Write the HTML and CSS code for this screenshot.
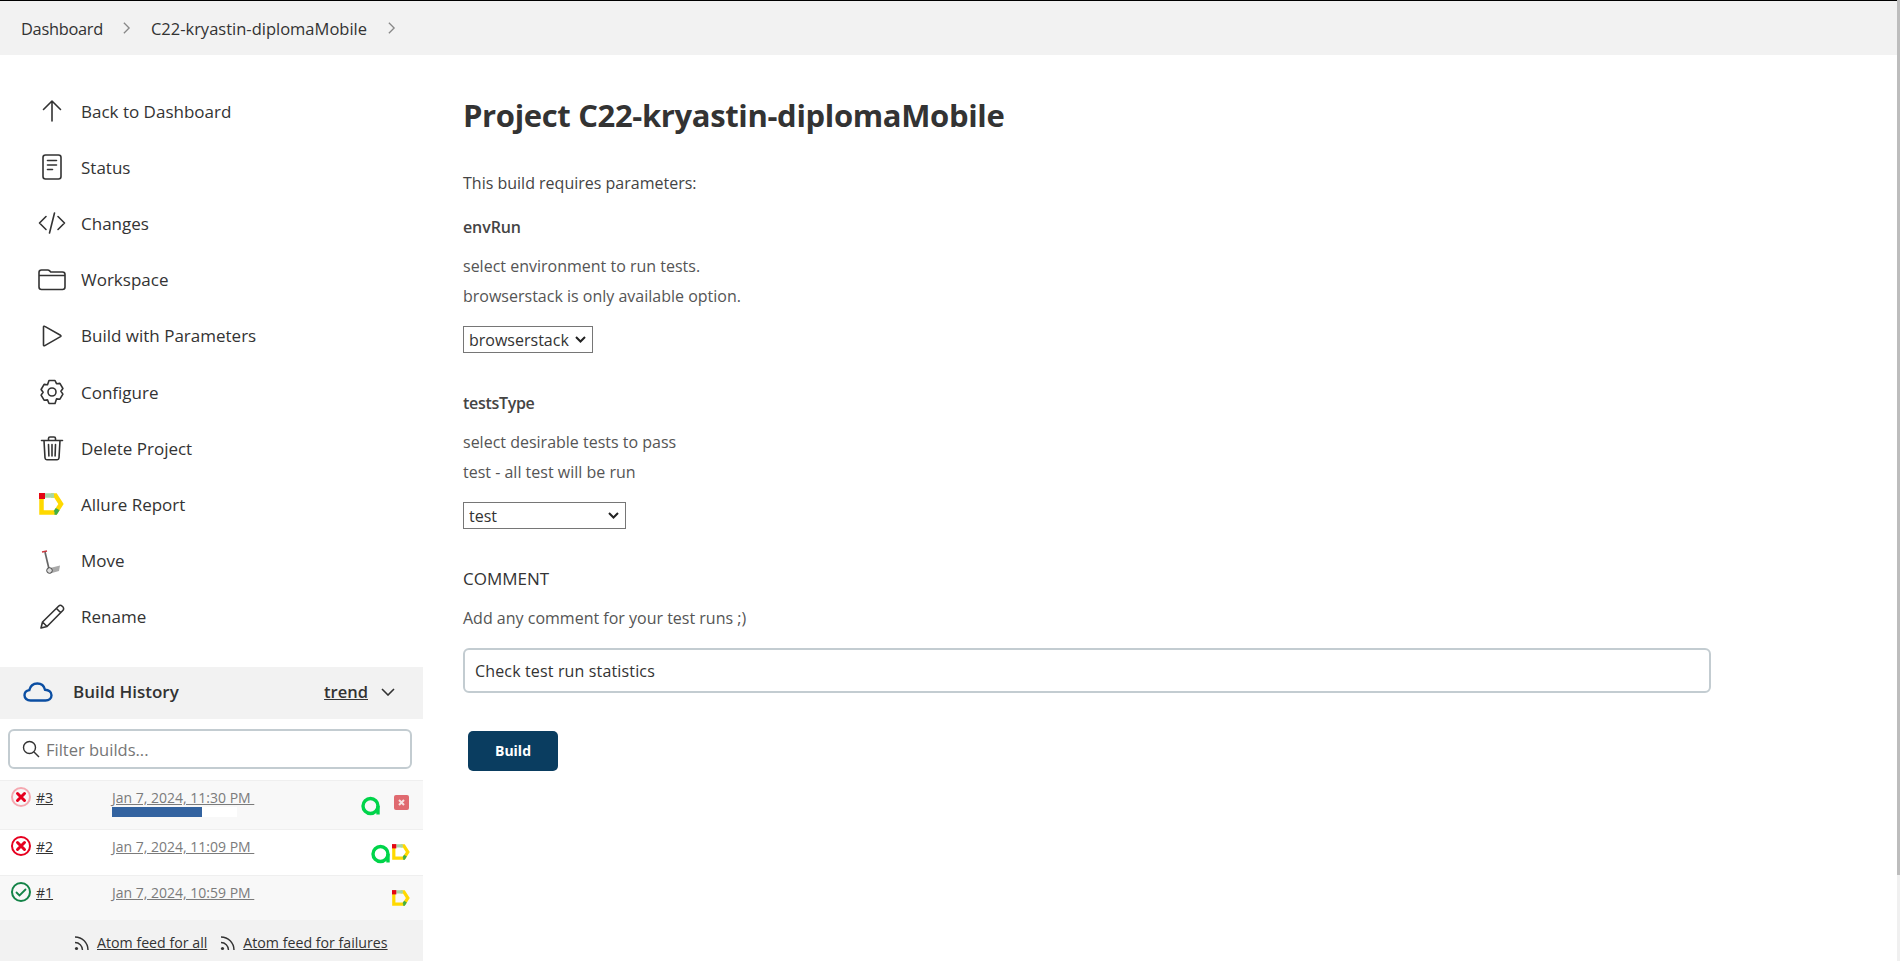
FILE: index.html
```html
<!DOCTYPE html>
<html lang="en">
<head>
    <meta charset="UTF-8">
    <title>C22-kryastin-diplomaMobile [Jenkins]</title>
    <link rel="stylesheet" href="styles.css">
</head>
<body>

<div id="page">
    <div id="breadcrumbBar">
        <a class="crumb firstCrumb">Dashboard</a>
        <svg class="crumbArrow" viewBox="0 0 10 16"><path d="M2 2l6 6-6 6"/></svg>
        <a class="crumb projectCrumb">C22-kryastin-diplomaMobile</a>
        <svg class="crumbArrow lastArrow" viewBox="0 0 10 16"><path d="M2 2l6 6-6 6"/></svg>
    </div>

    <div id="content">
        <div id="sidebar">
            <div id="tasks">
                <div class="task">
                    <svg class="icon" viewBox="0 0 28 28"><path d="M14 24V4M5.500 12.500L14 4l8.500 8.500"/></svg>
                    <span>Back to Dashboard</span>
                </div>
                <div class="task">
                    <svg class="icon" viewBox="0 0 28 28"><rect x="5" y="2" width="18" height="24" rx="2.500"/><path d="M9.500 7.500h9M9.500 12h9M9.500 16.500h5"/></svg>
                    <span>Status</span>
                </div>
                <div class="task">
                    <svg class="icon" viewBox="0 0 28 28"><path d="M8 7.500L1.500 14 8 20.500M20 7.500l6.500 6.500-6.500 6.500M16.500 4l-5 20"/></svg>
                    <span>Changes</span>
                </div>
                <div class="task">
                    <svg class="icon" viewBox="0 0 28 28"><path d="M1 9V6.500C1 5.100 2 4 3.500 4h6.200c.8 0 1.400.3 2 .9l1 1.100H24.500C26 6 27 7.100 27 8.500V21c0 1.600-1 2.500-2.500 2.500h-21C2 23.500 1 22.600 1 21V9zM1 9.500h26"/></svg>
                    <span>Workspace</span>
                </div>
                <div class="task">
                    <svg class="icon" viewBox="0 0 28 28"><path d="M5.500 5v18c0 .8.700 1 1.300.6L22.500 14.600c.6-.4.600-.9 0-1.300L6.800 4.400C6.200 4 5.500 4.200 5.500 5z"/></svg>
                    <span>Build with Parameters</span>
                </div>
                <div class="task">
                    <svg class="icon" viewBox="0 0 28 28"><path d="M11 2.500h6l1.500 3.200 3.400-.3 3 5.100-2 2.800 2 2.800-3 5.100-3.400-.3L17 25.500h-6l-1.500-3.600-3.400.3-3-5.100 2-2.800-2-2.800 3-5.100 3.400.3z"/><circle cx="14" cy="14" r="4"/></svg>
                    <span>Configure</span>
                </div>
                <div class="task">
                    <svg class="icon" viewBox="0 0 28 28"><path d="M3.500 6.500h21M10.500 6.500V4.500c0-1 .7-1.500 1.500-1.500h4c.9 0 1.500.5 1.500 1.500v2M6 6.500l1 17.500c.1 1 .8 1.700 1.800 1.700h10.400c1 0 1.700-.7 1.800-1.700L22 6.500M10.500 10.500l.4 11.500M14 10.500V22M17.500 10.500L17.100 22"/></svg>
                    <span>Delete Project</span>
                </div>
                <div class="task">
                    <svg class="allure" viewBox="0 0 25 22">
                        <path class="alY" d="M2.500 2.500V19.500H16.500L22 11 16.500 2.500H12"/>
                        <path class="alG" d="M6 2.500h9"/>
                        <path class="alR" d="M0 0h6v6H0z"/>
                        <path class="alD" d="M15.500 19.500h1l2.200-3.400"/>
                    </svg>
                    <span>Allure Report</span>
                </div>
                <div class="task">
                    <svg class="moveIcon" viewBox="0 0 28 28">
                        <path class="movePlate" d="M12 21l10-2.500-1 5.500-9 2.500z"/>
                        <path class="movePole" d="M7 5l4 17"/>
                        <path class="moveGrip" d="M4 5l5-1"/>
                        <circle class="moveWheel" cx="11.500" cy="23.500" r="2.800"/>
                    </svg>
                    <span>Move</span>
                </div>
                <div class="task">
                    <svg class="icon" viewBox="0 0 28 28"><path d="M3 25l1.500-6L20.500 3.200c1.100-1.100 2.600-1.100 3.700 0l.6.600c1.100 1.100 1.100 2.600 0 3.700L9 23.500zM4.500 19L9 23.500M18.500 5.500l4 4"/></svg>
                    <span>Rename</span>
                </div>
            </div>

            <div id="historyHeader">
                <svg class="cloud" viewBox="0 0 30 20"><path d="M7.500 18.500C4 18.500 1.500 16.300 1.500 13.300c0-2.800 2-4.800 4.800-5.200C7.300 4 10.300 1.500 14.300 1.500c3.800 0 6.800 2.400 7.700 6.200 3.600.2 6.500 2.200 6.500 5.500 0 3.200-2.500 5.300-6 5.300z"/></svg>
                <span class="historyTitle">Build History</span>
                <a class="trend">trend</a>
                <svg class="trendArrow" viewBox="0 0 14 8"><path d="M1 1l6 6 6-6"/></svg>
            </div>

            <div id="filterWrap">
                <div id="filterBox">
                    <svg class="searchIcon" viewBox="0 0 18 18"><circle cx="7.500" cy="7.500" r="6"/><path d="M12 12l5 5"/></svg>
                    <input class="filterInput" type="text" placeholder="Filter builds...">
                </div>
            </div>

            <div class="buildRow rowThree">
                <svg class="ball running" viewBox="0 0 22 22"><circle cx="11" cy="11" r="9"/><path d="M7.500 7.500l7 7M14.500 7.500l-7 7"/></svg>
                <a class="buildNum">#3</a>
                <div class="buildDate">
                    <a>Jan 7, 2024, 11:30 PM&nbsp;</a>
                    <div class="progress"><div class="progressFill" style="width: 72%"></div></div>
                </div>
                <div class="badges">
                    <svg class="badgeA" viewBox="0 0 20 20"><circle cx="9.500" cy="10" r="7.500"/><path d="M17 10v8.500"/></svg>
                    <svg class="stopBox" viewBox="0 0 15 15"><rect width="15" height="15" rx="2"/><path d="M5 5l5 5M10 5l-5 5"/></svg>
                </div>
            </div>
            <div class="buildRow rowTwo">
                <svg class="ball failed" viewBox="0 0 22 22"><circle cx="11" cy="11" r="9"/><path d="M7.500 7.500l7 7M14.500 7.500l-7 7"/></svg>
                <a class="buildNum">#2</a>
                <div class="buildDate"><a>Jan 7, 2024, 11:09 PM&nbsp;</a></div>
                <div class="badges tight">
                    <svg class="badgeA" viewBox="0 0 20 20"><circle cx="9.500" cy="10" r="7.500"/><path d="M17 10v8.500"/></svg>
                    <svg class="allure small" viewBox="0 0 25 22">
                        <path class="alY" d="M2.500 2.500V19.500H16.500L22 11 16.500 2.500H12"/>
                        <path class="alG" d="M6 2.500h9"/>
                        <path class="alR" d="M0 0h6v6H0z"/>
                        <path class="alD" d="M15.500 19.500h1l2.200-3.400"/>
                    </svg>
                </div>
            </div>
            <div class="buildRow rowOne">
                <svg class="ball success" viewBox="0 0 22 22"><circle cx="11" cy="11" r="9"/><path d="M6.500 11.500l3 3 6-6"/></svg>
                <a class="buildNum">#1</a>
                <div class="buildDate"><a>Jan 7, 2024, 10:59 PM&nbsp;</a></div>
                <div class="badges tight">
                    <svg class="allure small" viewBox="0 0 25 22">
                        <path class="alY" d="M2.500 2.500V19.500H16.500L22 11 16.500 2.500H12"/>
                        <path class="alG" d="M6 2.500h9"/>
                        <path class="alR" d="M0 0h6v6H0z"/>
                        <path class="alD" d="M15.500 19.500h1l2.200-3.400"/>
                    </svg>
                </div>
            </div>

            <div id="feeds">
                <svg class="rss" viewBox="0 0 16 16"><circle cx="2.500" cy="13.500" r="1.600"/><path d="M1 7.500c4.200 0 7.500 3.300 7.500 7.500M1 2c7.200 0 13 5.800 13 13"/></svg>
                <a class="feedLink">Atom feed for all</a>
                <svg class="rss" viewBox="0 0 16 16"><circle cx="2.500" cy="13.500" r="1.600"/><path d="M1 7.500c4.200 0 7.500 3.300 7.500 7.500M1 2c7.200 0 13 5.800 13 13"/></svg>
                <a class="feedLink">Atom feed for failures</a>
            </div>
        </div>

        <div id="main">
            <h1>Project C22-kryastin-diplomaMobile</h1>
            <p class="intro">This build requires parameters:</p>

            <div class="param firstParam">
                <div class="paramName">envRun</div>
                <div class="paramDesc">select environment to run tests.<br>browserstack is only available option.</div>
                <select class="envSelect"><option>browserstack</option></select>
            </div>

            <div class="param typeParam">
                <div class="paramName tightName">testsType</div>
                <div class="paramDesc">select desirable tests to pass<br>test - all test will be run</div>
                <select class="typeSelect"><option>test</option></select>
            </div>

            <div class="param commentParam">
                <div class="paramName plain">COMMENT</div>
                <div class="paramDesc">Add any comment for your test runs ;)</div>
                <input class="commentInput" type="text" value="Check test run statistics">
            </div>

            <button id="buildBtn">Build</button>
        </div>

        <div id="scrollTrack"><div id="scrollThumb"></div></div>
    </div>
</div>

</body>
</html>
```

FILE: styles.css
```css
* {
    box-sizing: border-box;
}

html, body {
    margin: 0;
    height: 100%;
    overflow: hidden;
}

body {
    font-family: 'Open Sans', 'Noto Sans', sans-serif;
    font-size: 16px;
    color: #333;
    background-color: white;
}

a {
    color: inherit;
}

#page {
    height: 961px;
    display: flex;
    flex-direction: column;
    border-top: 1px solid black;
}

#breadcrumbBar {
    height: 54px;
    flex: none;
    display: flex;
    align-items: center;
    padding-left: 21px;
    background-color: #f2f2f2;
    font-size: 16.400px;
}

.firstCrumb {
    letter-spacing: -0.300px;
}

.projectCrumb {
    font-size: 16.500px;
}

.crumbArrow {
    width: 9px;
    height: 14px;
    margin: 0 20px 0 19px;
    fill: none;
    stroke: #888;
    stroke-width: 1.500;
}

.crumbArrow.lastArrow {
    margin-left: 20px;
}

#content {
    flex: 1;
    display: flex;
    min-height: 0;
}

#sidebar {
    width: 423px;
    flex: none;
    padding-top: 28px;
    display: flex;
    flex-direction: column;
}

#tasks {
    display: flex;
    flex-direction: column;
    margin-bottom: 22px;
    font-size: 17px;
}

.task {
    height: 56.200px;
    display: flex;
    align-items: center;
    padding-left: 38px;
}

.task span {
    margin-left: 15px;
}

.icon {
    width: 28px;
    height: 28px;
    flex: none;
    fill: none;
    stroke: #333;
    stroke-width: 1.600;
    stroke-linecap: round;
    stroke-linejoin: round;
}

.allure {
    width: 25px;
    height: 22px;
    flex: none;
    margin: 0 2px 0 1px;
}

.allure.small {
    width: 18px;
    height: 16px;
    margin: 0;
}

.allure path {
    fill: none;
    stroke-width: 4.500;
}

.allure .alY { stroke: #ffd900; }
.allure .alG { stroke: #a5d6a7; }
.allure .alR { fill: #e30613; stroke: none; }
.allure .alD { stroke: #3fae49; }

.moveIcon {
    width: 28px;
    height: 28px;
    flex: none;
    fill: none;
}

.movePlate { fill: #a9a9a9; }
.movePole { stroke: #666; stroke-width: 1.700; }
.moveGrip { stroke: #c9363e; stroke-width: 1.500; }
.moveWheel { fill: #ddd; stroke: #444; }

#historyHeader {
    height: 52px;
    flex: none;
    display: flex;
    align-items: center;
    padding: 0 0 2px 23px;
    background-color: #f2f2f2;
    font-size: 17px;
}

.cloud {
    width: 30px;
    height: 20px;
    fill: none;
    stroke: #0b4ea2;
    stroke-width: 2.400;
}

.historyTitle {
    margin-left: 20px;
    font-weight: 600;
}

.trend {
    margin-left: auto;
    font-size: 16.500px;
    font-weight: 600;
    text-decoration: underline;
}

.trendArrow {
    width: 14px;
    height: 8px;
    margin: 0 28px 0 13px;
    fill: none;
    stroke: #333;
    stroke-width: 1.600;
}

#filterWrap {
    height: 61px;
    flex: none;
    padding: 10px 11px 0 8px;
}

#filterBox {
    height: 40px;
    display: flex;
    align-items: center;
    padding-left: 12px;
    border: 2px solid #c3ccd1;
    border-radius: 6px;
}

.searchIcon {
    width: 18px;
    height: 18px;
    flex: none;
    fill: none;
    stroke: #333;
    stroke-width: 1.400;
}

.filterInput {
    flex: 1;
    min-width: 0;
    margin-left: 6px;
    border: none;
    outline: none;
    padding: 2px 0 0 0;
    background: none;
    font-family: inherit;
    font-size: 16.500px;
}

.filterInput::placeholder {
    color: #767676;
    opacity: 1;
}

.buildRow {
    flex: none;
    display: flex;
    align-items: flex-start;
    padding: 5px 0 0 10px;
    border-top: 1px solid #efefef;
    font-size: 14px;
}

.rowThree {
    height: 49px;
    background-color: #f8f8f8;
}

.rowTwo {
    height: 46px;
    background-color: white;
}

.rowOne {
    height: 45px;
    background-color: #f8f8f8;
}

.ball {
    width: 22px;
    height: 22px;
    flex: none;
    fill: none;
}

.ball circle {
    stroke-width: 2;
}

.ball path {
    stroke-width: 3;
    stroke-linecap: round;
}

.running circle { stroke: #f5a8b0; }
.running path { stroke: #e6001f; }
.failed circle, .failed path { stroke: #e6001f; }
.success circle, .success path { stroke: #138347; }
.success path { stroke-width: 1.800; }

.buildNum {
    width: 76px;
    margin: 2px 0 0 4px;
    text-decoration: underline;
}

.buildDate {
    width: 210px;
    flex: none;
    margin-top: 2px;
    color: #7b7b7b;
}

.buildDate a {
    text-decoration: underline;
}

.progress {
    width: 125px;
    height: 10px;
    background-color: white;
}

.progressFill {
    height: 100%;
    background-color: #3363a0;
}

.badges {
    margin-left: auto;
    display: flex;
    align-items: flex-start;
    gap: 13px;
    padding: 10px 14px 0 0;
}

.badges.tight {
    gap: 1px;
    padding: 9px 13px 0 0;
}

.badgeA {
    width: 20px;
    height: 20px;
    fill: none;
    stroke: #00d44a;
    stroke-width: 3.400;
}

.stopBox {
    width: 15px;
    height: 15px;
    margin-top: -1px;
}

.stopBox rect {
    fill: #e06a70;
}

.stopBox path {
    stroke: #f6e4e4;
    stroke-width: 2;
}

#feeds {
    flex: 1;
    display: flex;
    align-items: center;
    padding: 5px 0 0 74px;
    background-color: #f2f2f2;
    font-size: 14.200px;
}

.rss {
    width: 16px;
    height: 16px;
    flex: none;
    fill: none;
    stroke: #333;
    stroke-width: 1.400;
}

.rss circle {
    fill: #333;
    stroke: none;
}

.feedLink {
    margin: 0 13px 0 7px;
    text-decoration: underline;
}

#main {
    flex: 1;
    min-width: 0;
    padding: 0 0 0 40px;
}

h1 {
    margin: 37px 0 0 0;
    font-size: 31px;
    line-height: 46px;
    font-weight: 700;
    letter-spacing: -0.350px;
}

.intro {
    margin: 33px 0 0 0;
    line-height: 24px;
    color: #444;
}

.param {
    display: flex;
    flex-direction: column;
    align-items: flex-start;
}

.firstParam {
    margin-top: 20px;
}

.typeParam {
    margin-top: 38px;
}

.commentParam {
    margin-top: 38px;
}

.paramName {
    font-weight: 600;
    line-height: 24px;
    color: #444;
    letter-spacing: -0.100px;
}

.paramName.tightName {
    letter-spacing: -0.300px;
}

.paramName.plain {
    font-size: 17px;
    font-weight: 400;
    color: #333;
    letter-spacing: 0;
}

.paramDesc {
    margin-top: 13px;
    line-height: 29.500px;
    color: #555;
}

select {
    appearance: none;
    margin-top: 15px;
    font-family: inherit;
    font-size: 16px;
    background-color: white;
    background-image: url("data:image/svg+xml,%3Csvg xmlns='http://www.w3.org/2000/svg' viewBox='0 0 11 7'%3E%3Cpath d='M1 1l4.500 4.500L10 1' fill='none' stroke='%23222' stroke-width='2'/%3E%3C/svg%3E");
    background-repeat: no-repeat;
    background-position: right 6px center;
    background-size: 11px 7px;
    color: #333;
    border: 1px solid #767676;
    border-radius: 0;
    padding: 0 0 0 5px;
}

.envSelect {
    width: 130px;
    height: 27px;
}

.typeSelect {
    width: 163px;
    height: 27px;
}

.commentInput {
    width: 1248px;
    height: 45px;
    margin-top: 14px;
    padding: 1px 10px 0;
    border: 2px solid #c3ccd1;
    border-radius: 6px;
    outline: none;
    font-family: inherit;
    font-size: 16px;
    letter-spacing: 0.150px;
    color: #333;
}

#buildBtn {
    display: block;
    width: 90px;
    height: 40px;
    margin: 38px 0 0 5px;
    border: none;
    border-radius: 5px;
    background-color: #0a3d60;
    color: white;
    font-family: inherit;
    font-size: 14px;
    font-weight: 700;
}

#scrollTrack {
    width: 3px;
    flex: none;
    margin-top: -55px;
    background-color: #f0f0f0;
}

#scrollThumb {
    height: 875px;
    background-color: #bdbdbd;
}
```
